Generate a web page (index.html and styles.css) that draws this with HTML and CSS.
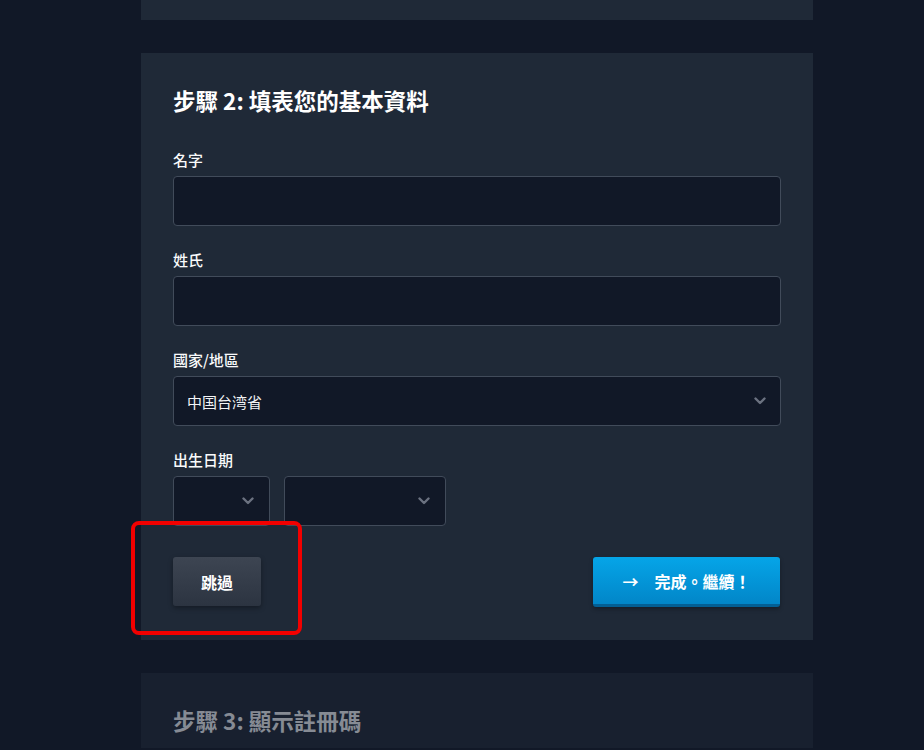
FILE: index.html
```html
<!DOCTYPE html>
<html lang="zh-Hant">
<head>
    <meta charset="UTF-8">
    <meta name="viewport" content="width=device-width, initial-scale=1.0">
    <title>註冊步驟</title>
    <link rel="stylesheet" href="styles.css">
</head>
<body>
    <div class="steps">
        <!-- previous step, scrolled mostly out of view -->
        <section class="step-card step-prev"></section>

        <section class="step-card">
            <h2 class="step-title">步驟 2: 填表您的基本資料</h2>

            <div class="field">
                <label class="field-label" for="first-name">名字</label>
                <input class="text-input" id="first-name" type="text">
            </div>

            <div class="field">
                <label class="field-label" for="last-name">姓氏</label>
                <input class="text-input" id="last-name" type="text">
            </div>

            <div class="field">
                <label class="field-label">國家/地區</label>
                <div class="select-box">
                    <span class="select-value">中国台湾省</span>
                    <svg class="chevron" width="12" height="8" viewBox="0 0 12 8"><polyline points="1.5,1.5 6,6 10.5,1.5" fill="none" stroke="currentColor" stroke-width="2.4" stroke-linecap="round" stroke-linejoin="round"/></svg>
                </div>
            </div>

            <div class="field">
                <label class="field-label">出生日期</label>
                <div class="date-row">
                    <div class="select-box select-month">
                        <span class="select-value"></span>
                        <svg class="chevron" width="12" height="8" viewBox="0 0 12 8"><polyline points="1.5,1.5 6,6 10.5,1.5" fill="none" stroke="currentColor" stroke-width="2.4" stroke-linecap="round" stroke-linejoin="round"/></svg>
                    </div>
                    <div class="select-box select-year">
                        <span class="select-value"></span>
                        <svg class="chevron" width="12" height="8" viewBox="0 0 12 8"><polyline points="1.5,1.5 6,6 10.5,1.5" fill="none" stroke="currentColor" stroke-width="2.4" stroke-linecap="round" stroke-linejoin="round"/></svg>
                    </div>
                </div>
            </div>

            <div class="actions">
                <div class="skip-wrap">
                    <button class="btn btn-skip">跳過</button>
                    <span class="highlight"></span>
                </div>
                <button class="btn btn-primary"><span class="arrow">→</span>完成。繼續！</button>
            </div>
        </section>

        <section class="step-card step-disabled">
            <h2 class="step-title">步驟 3: 顯示註冊碼</h2>
        </section>
    </div>
</body>
</html>
```

FILE: styles.css
```css
body {
    margin: 0;
    background-color: #111827;
    color: #f3f4f6;
    font-family: "Noto Sans CJK TC", "Noto Sans", sans-serif;
}
.steps {
    width: 672px;
    margin-left: 141px;
}
.step-card {
    background-color: #1f2937;
    padding: 32px 32px 33px;
    margin-bottom: 33px;
}
.step-prev {
    height: 20px;
    padding: 0;
}
.step-disabled {
    background-color: #18202f;
    padding-bottom: 13px;
}
.step-disabled .step-title {
    color: #868b94;
    margin-bottom: 0;
}
.step-title {
    margin: 0 0 35px;
    font-size: 22.5px;
    line-height: 30px;
    font-weight: 700;
    color: #ffffff;
}
.field {
    margin-bottom: 24px;
}
.field-label {
    display: block;
    font-size: 15px;
    line-height: 20px;
    font-weight: 500;
    margin-bottom: 6px;
    color: #f9fafb;
}
.text-input,
.select-box {
    box-sizing: border-box;
    width: 100%;
    height: 50px;
    background-color: #111827;
    border: 1px solid #414b5a;
    border-radius: 4px;
    color: #f3f4f6;
    font-family: inherit;
    font-size: 15px;
    outline: none;
}
.select-box {
    display: flex;
    align-items: center;
    justify-content: space-between;
    padding: 0 14px 0 13px;
}
.chevron {
    color: #6b7280;
}
.date-row {
    display: flex;
    gap: 14px;
}
.select-month {
    width: 97px;
    padding-right: 15px;
}
.select-year {
    width: 162px;
    padding-right: 15px;
}
.actions {
    display: flex;
    justify-content: space-between;
    align-items: flex-start;
    margin-top: 31px;
}
.skip-wrap {
    position: relative;
}
.btn {
    border: none;
    border-radius: 3px;
    color: #ffffff;
    font-family: inherit;
    font-size: 16px;
    font-weight: 700;
    cursor: pointer;
}
.btn-skip {
    width: 88px;
    height: 49px;
    background: linear-gradient(#3d4552, #2c3441);
    box-shadow: 0 2px 5px rgba(0, 0, 0, 0.35);
}
.btn-primary {
    width: 187px;
    height: 50px;
    margin-right: 1px;
    background: linear-gradient(#05a5e8, #0286c8);
    border-bottom: 3px solid #035f94;
    box-shadow: 0 2px 4px rgba(0, 0, 0, 0.3);
}
.arrow {
    margin-right: 16px;
}
.highlight {
    position: absolute;
    left: -42px;
    top: -36px;
    width: 171px;
    height: 114px;
    box-sizing: border-box;
    border: 4px solid #f20000;
    border-radius: 8px;
    pointer-events: none;
}
```
